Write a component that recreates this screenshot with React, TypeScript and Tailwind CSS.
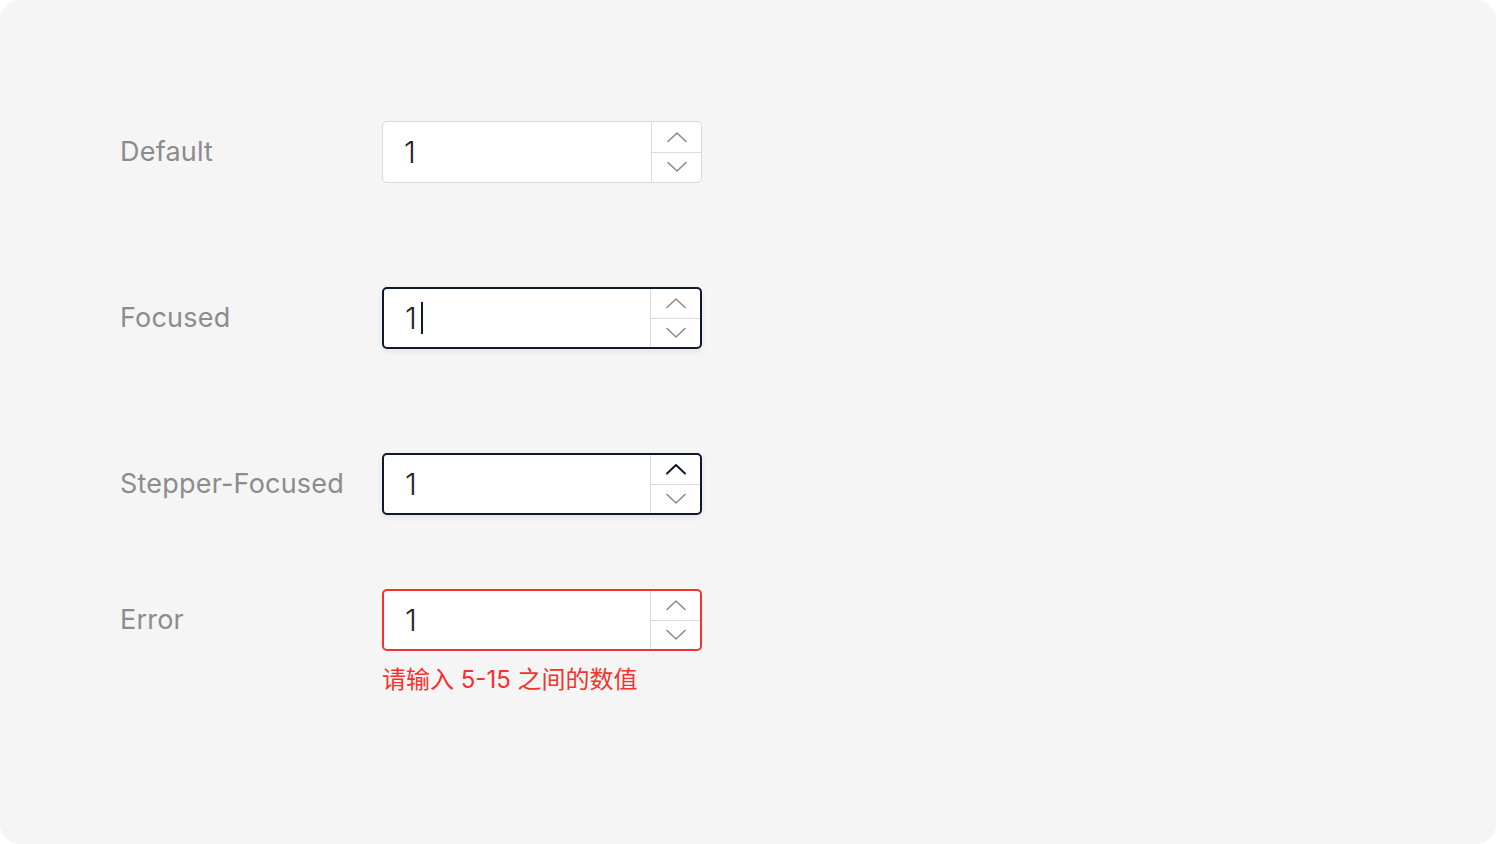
import React from 'react';

type State = 'default' | 'focused' | 'stepper' | 'error';

const Chevron = ({up, active}: {up: boolean; active: boolean}) => (
    <svg width="22" height="12" viewBox="0 0 22 12" fill="none">
        <path
            d={up ? 'M2 10.5L11 2L20 10.5' : 'M2 1.5L11 10L20 1.5'}
            stroke={active ? '#0f1a2e' : '#8c8c8c'}
            strokeWidth={active ? 2 : 1.6}
            strokeLinecap="round"
            strokeLinejoin="round"
        />
    </svg>
);

const NumberBox = ({state}: {state: State}) => {
    const border =
        state === 'error'
            ? 'border-2 border-[#f5322b]'
            : state === 'default'
                ? 'border-[1.5px] border-[#d9d9d9]'
                : 'border-2 border-[#0f1a2e] shadow-[0_2px_6px_rgba(0,0,0,0.08)]';
    return (
        <div className={`flex h-[62px] w-[320px] rounded-[5px] bg-white overflow-hidden ${border}`}>
            <div className="flex flex-1 items-center pl-[21px] text-[30px] font-light text-[#222] leading-none">
                <span>1</span>
                {state === 'focused' && <span className="ml-[4px] h-[32px] w-[2px] bg-[#0f1a2e]"/>}
            </div>
            <div className="flex w-[50px] flex-col border-l-[1.5px] border-[#d9d9d9]">
                <div className="flex flex-1 items-center justify-center border-b-[1.5px] border-[#d9d9d9]">
                    <Chevron up active={state === 'stepper'}/>
                </div>
                <div className="flex flex-1 items-center justify-center">
                    <Chevron up={false} active={false}/>
                </div>
            </div>
        </div>
    );
};

const Row = ({label, state, className}: {label: string; state: State; className?: string}) => (
    <div className={`flex items-start ${className ?? ''}`}>
        <div className="flex h-[62px] w-[262px] items-center text-[27px] tracking-[0.2px] text-[#8c8c8c]">{label}</div>
        <div className="flex flex-col">
            <NumberBox state={state}/>
            {state === 'error' && (
                <div className="mt-[14px] text-[24px] leading-[30px] text-[#f5322b]">
                    请输入 5-15 之间的数值
                </div>
            )}
        </div>
    </div>
);

const App = () => {
    return (
        <div className="bg-white">
            <div
                className="h-[844px] w-[1496px] rounded-[20px] bg-[#f5f5f5] pl-[120px] pt-[121px]"
                style={{fontFamily: 'Inter, "Noto Sans CJK SC", sans-serif'}}
            >
                <Row label="Default" state="default"/>
                <Row label="Focused" state="focused" className="mt-[104px]"/>
                <Row label="Stepper-Focused" state="stepper" className="mt-[104px]"/>
                <Row label="Error" state="error" className="mt-[74px]"/>
            </div>
        </div>
    );
};

export default App;
